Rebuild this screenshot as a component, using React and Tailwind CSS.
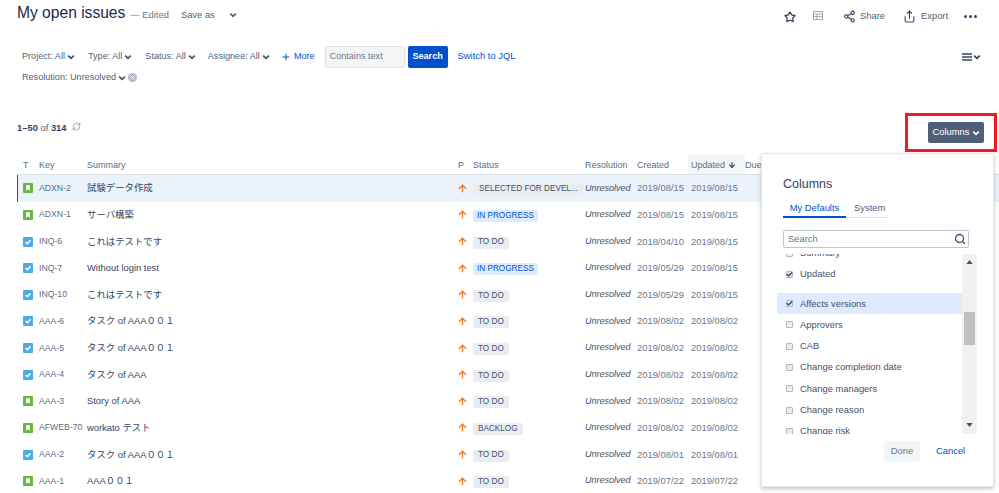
import React from "react";
import { Star, Share2, Share, RefreshCw, Search, ArrowUp, ArrowDown, Plus, X, Check } from "lucide-react";

const FONT = "font-['Liberation_Sans','Noto_Sans_CJK_JP',sans-serif]";

function Chevron({ className = "" }) {
  return (
    <svg viewBox="0 0 10 10" className={className} fill="none" stroke="currentColor" strokeWidth="2.2">
      <path d="M1.5 3.2 L5 6.7 L8.5 3.2" />
    </svg>
  );
}

function StoryIcon() {
  return (
    <svg viewBox="0 0 10 10" className="w-[10px] h-[10px]">
      <rect width="10" height="10" rx="1" fill="#63ba3c" />
      <path d="M3 2.2 H7 V7.8 L5 6.3 L3 7.8 Z" fill="#fff" />
    </svg>
  );
}

function TaskIcon() {
  return (
    <svg viewBox="0 0 10 10" className="w-[10px] h-[10px]">
      <rect width="10" height="10" rx="1" fill="#4bade8" />
      <path d="M2.6 5 L4.4 6.8 L7.5 3.2" fill="none" stroke="#fff" strokeWidth="1.4" />
    </svg>
  );
}

function Filter({ label }) {
  return (
    <span className="flex items-center gap-[2px] text-[#505f79] whitespace-nowrap">
      {label}
      <Chevron className="w-[8px] h-[8px] text-[#42526e]" />
    </span>
  );
}

function Lozenge({ kind, children }) {
  const styles = {
    blue: "bg-[#deebff] text-[#0052cc] px-[4px]",
    gray: "bg-[#ebecf0] text-[#42526e] px-[5px]",
    wide: "bg-[#ebecf0] text-[#42526e] px-[6px]",
  };
  return (
    <span className={`inline-flex items-center h-[12px] mt-[2px] rounded-[2px] text-[8.2px] whitespace-nowrap ${styles[kind]}`}>
      {children}
    </span>
  );
}

const GRID = "grid grid-cols-[22px_48px_371px_15px_112px_52px_54px_54px_1fr] items-center";

const rows = [
  ["s", "ADXN-2", "試験データ作成", "wide", "SELECTED FOR DEVEL...", "2019/08/15", "2019/08/15"],
  ["s", "ADXN-1", "サーバ構築", "blue", "IN PROGRESS", "2019/08/15", "2019/08/15"],
  ["t", "INQ-6", "これはテストです", "gray", "TO DO", "2018/04/10", "2019/08/15"],
  ["t", "INQ-7", "Without login test", "blue", "IN PROGRESS", "2019/05/29", "2019/08/15"],
  ["t", "INQ-10", "これはテストです", "gray", "TO DO", "2019/05/29", "2019/08/15"],
  ["t", "AAA-6", "タスク of AAA００１", "gray", "TO DO", "2019/08/02", "2019/08/02"],
  ["t", "AAA-5", "タスク of AAA００１", "gray", "TO DO", "2019/08/02", "2019/08/02"],
  ["t", "AAA-4", "タスク of AAA", "gray", "TO DO", "2019/08/02", "2019/08/02"],
  ["s", "AAA-3", "Story of AAA", "gray", "TO DO", "2019/08/02", "2019/08/02"],
  ["s", "AFWEB-70", "workato テスト", "gray", "BACKLOG", "2019/08/02", "2019/08/02"],
  ["t", "AAA-2", "タスク of AAA００１", "gray", "TO DO", "2019/08/01", "2019/08/01"],
  ["s", "AAA-1", "AAA００１", "gray", "TO DO", "2019/07/22", "2019/07/22"],
];

function Row({ r, i }) {
  const selected = i === 0;
  return (
    <div className={`${GRID} h-[26.64px] text-[9.4px] ${selected ? "bg-[#ebf2f9] shadow-[inset_1px_0_0_#42526e]" : ""}`}>
      <span className="pl-[6px] flex">{r[0] === "s" ? <StoryIcon /> : <TaskIcon />}</span>
      <span className="text-[#5e6c84] text-[8.7px] whitespace-nowrap">{r[1]}</span>
      <span className="text-[#344563] text-[9.4px] whitespace-nowrap">{r[2]}</span>
      <span className="flex -ml-[1px]"><ArrowUp className="w-[11px] h-[11px] text-[#f57f25]" strokeWidth={3} /></span>
      <span className="flex"><Lozenge kind={r[3]}>{r[4]}</Lozenge></span>
      <span className="italic text-[9px] text-[#42526e] whitespace-nowrap">Unresolved</span>
      <span className="text-[#6b778c] whitespace-nowrap">{r[5]}</span>
      <span className="text-[#6b778c] whitespace-nowrap">{r[6]}</span>
      <span />
    </div>
  );
}

function Option({ label, checked, active }) {
  return (
    <div className={`flex items-center gap-[7px] pl-[9px] h-[21.3px] shrink-0 text-[9.4px] text-[#42526e] whitespace-nowrap ${active ? "bg-[#deebff]" : ""}`}>
      <span className={`flex items-center justify-center w-[7px] h-[7px] rounded-[1px] border border-[#b3b9c4] ${checked ? "bg-[#dfe1e6]" : "bg-[#ebecf0]"}`}>
        {checked && <Check className="w-[7px] h-[7px] text-[#253858] shrink-0" strokeWidth={4} />}
      </span>
      {label}
    </div>
  );
}

function ColumnsPanel() {
  return (
    <div className="absolute left-[761px] top-[153px] w-[233px] h-[334px] bg-white border border-[#e6e8ec] rounded-[2px] shadow-[0_2px_4px_rgba(9,30,66,0.25)] flex flex-col pl-[21px]">
      <div className="text-[12.5px] text-[#344563] mt-[22px] leading-[17px]">Columns</div>
      <div className="flex mt-[8px] w-[105px] text-[9.4px] border-b border-[#dfe1e6] h-[17px] shrink-0">
        <span className="w-[63px] text-center text-[#0052cc] border-b-[2px] border-[#0052cc] h-[17px]">My Defaults</span>
        <span className="pl-[8px] text-[#505f79]">System</span>
      </div>
      <div className="mt-[12px] w-[186px] h-[18px] border border-[#c1c7d0] rounded-[2px] flex items-center justify-between pl-[4px] pr-[2px] text-[9.4px] text-[#6b778c] shrink-0">
        Search
        <Search className="w-[12px] h-[12px] text-[#42526e]" strokeWidth={2.6} />
      </div>
      <div className="flex mt-[6px] h-[180px] -ml-[6px] shrink-0">
        <div className="w-[185px] h-[180px] overflow-hidden">
          <div className="-mt-[11.6px]">
            <Option label="Summary" />
            <Option label="Updated" checked />
            <div className="h-[8px]" />
            <Option label="Affects versions" checked active />
            <Option label="Approvers" />
            <Option label="CAB" />
            <Option label="Change completion date" />
            <Option label="Change managers" />
            <Option label="Change reason" />
            <Option label="Change risk" />
          </div>
        </div>
        <div className="w-[15px] h-[180px] bg-[#f1f1f1] flex flex-col items-center">
          <svg viewBox="0 0 8 5" className="w-[7px] h-[4px] mt-[6px] text-[#505050]"><path d="M4 0 L8 5 H0 Z" fill="currentColor" /></svg>
          <div className="w-[11px] h-[33px] bg-[#c1c1c1] mt-[48px]" />
          <div className="flex-1" />
          <svg viewBox="0 0 8 5" className="w-[7px] h-[4px] mb-[7px] text-[#505050]"><path d="M0 0 H8 L4 5 Z" fill="currentColor" /></svg>
        </div>
      </div>
      <div className="flex items-center mt-[7px] ml-[101px] text-[9.4px]">
        <span className="w-[36px] h-[21px] bg-[#f4f5f7] rounded-[3px] flex items-center justify-center text-[#6b778c]">Done</span>
        <span className="ml-[16px] text-[#0052cc]">Cancel</span>
      </div>
    </div>
  );
}

export default function App() {
  return (
    <div className={`relative w-[999px] h-[493px] overflow-hidden bg-white ${FONT}`}>
      {/* Header */}
      <div className="flex items-center h-[32px] pl-[17px] pr-[22px]">
        <span className="text-[15.6px] text-[#172b4d] leading-[26px] -mt-[6px]">My open issues</span>
        <span className="ml-[5px] text-[9.4px] text-[#6b778c] -mt-[2px]">— Edited</span>
        <span className="ml-[12px] text-[9.4px] text-[#505f79] -mt-[2px]">Save as</span>
        <Chevron className="ml-[14px] w-[8px] h-[8px] text-[#505f79] -mt-[2px]" />
        <div className="flex-1" />
        <Star className="w-[12px] h-[12px] text-[#253858] mt-[2px]" strokeWidth={2.4} />
        <svg viewBox="0 0 10 9" className="ml-[17px] w-[10px] h-[9px] text-[#97a0af] -mt-[2px]" fill="none" stroke="currentColor" strokeWidth="0.9"><rect x="0.5" y="0.5" width="9" height="8" /><path d="M0.5 3 H9.5 M0.5 5.7 H9.5 M4 3 V8.5" /></svg>
        <Share2 className="ml-[20px] w-[13px] h-[13px] text-[#344563]" strokeWidth={2} />
        <span className="ml-[4px] w-[24px] text-[9.4px] text-[#505f79]">Share</span>
        <Share className="ml-[19px] w-[13px] h-[13px] text-[#344563]" strokeWidth={2} />
        <span className="ml-[5px] w-[26px] text-[9.4px] text-[#505f79]">Export</span>
        <span className="ml-[17px] flex gap-[2px]">
          <i className="block w-[3px] h-[3px] rounded-full bg-[#344563]" />
          <i className="block w-[3px] h-[3px] rounded-full bg-[#344563]" />
          <i className="block w-[3px] h-[3px] rounded-full bg-[#344563]" />
        </span>
      </div>

      {/* Filters */}
      <div className="flex items-center h-[22px] mt-[14px] pl-[22px] pr-[18px] text-[9.1px]">
        <Filter label="Project: All" />
        <span className="ml-[13px]"><Filter label="Type: All" /></span>
        <span className="ml-[13px]"><Filter label="Status: All" /></span>
        <span className="ml-[12px]"><Filter label="Assignee: All" /></span>
        <span className="ml-[11px] flex items-center gap-[3px] text-[#0052cc]"><Plus className="w-[10px] h-[10px]" strokeWidth={2.4} />More</span>
        <span className="ml-[10px] w-[80px] h-[22px] bg-[#f4f5f7] border border-[#dfe1e6] rounded-[2px] flex items-center pl-[4px] text-[#6b778c]">Contains text</span>
        <span className="ml-[3px] w-[40px] h-[22px] bg-[#0052cc] rounded-[2px] flex items-center justify-center text-white font-bold">Search</span>
        <span className="ml-[10px] text-[#0052cc] -mt-[1px] text-[9.4px]">Switch to JQL</span>
        <div className="flex-1" />
        <span className="flex items-center gap-[1px] text-[#344563]">
          <svg viewBox="0 0 10 8" className="w-[10px] h-[8px]" fill="none" stroke="currentColor" strokeWidth="1.4"><path d="M0 1 H10 M0 4 H10 M0 7 H10" /></svg>
          <Chevron className="w-[8px] h-[8px]" />
        </span>
      </div>
      <div className="flex items-center h-[20px] pl-[22px] text-[9.1px]">
        <Filter label="Resolution: Unresolved" />
        <span className="ml-[2px] -mt-[2px] w-[9px] h-[9px] rounded-full bg-[#b3bac5] flex items-center justify-center"><X className="w-[7px] h-[7px] text-white" strokeWidth={3} /></span>
      </div>

      {/* Count + columns */}
      <div className="flex items-start h-[29px] mt-[26px] pl-[17px] pr-[15px] text-[9.4px] text-[#505f79]">
        <span className="mt-[7px] leading-[14px]"><b className="font-bold text-[#344563]">1–50</b> of <b className="font-bold text-[#344563]">314</b></span>
        <RefreshCw className="ml-[5px] mt-[8px] w-[9px] h-[9px] text-[#8993a4]" />
        <div className="flex-1" />
        <span className="mt-[8px] w-[56px] h-[21px] bg-[#505f79] rounded-[2px] flex items-center justify-center gap-[2px] text-white">
          Columns<Chevron className="w-[8px] h-[8px]" />
        </span>
      </div>

      {/* Table */}
      <div className="ml-[17px] mt-[11px]">
        <div className={`${GRID} h-[21px] pt-[3px] text-[9px] text-[#5e6c84] border-b border-[#dfe1e6]`}>
          <span className="pl-[6px]">T</span>
          <span>Key</span>
          <span>Summary</span>
          <span>P</span>
          <span>Status</span>
          <span className="whitespace-nowrap">Resolution</span>
          <span>Created</span>
          <span className="bg-[#f4f5f7] self-stretch -mt-[2px] pt-[2px] -ml-[3px] pl-[3px] flex items-center gap-[3px]">Updated<ArrowDown className="w-[8px] h-[8px] text-[#344563] -mt-[2px]" strokeWidth={3.5} /></span>
          <span>Due</span>
        </div>
        {rows.map((r, i) => <Row key={r[1]} r={r} i={i} />)}
      </div>

      <ColumnsPanel />

      {/* Red annotation */}
      <div className="absolute left-[905px] top-[113px] w-[92px] h-[39px] border-[3px] border-[#ee1c25]" />
    </div>
  );
}
